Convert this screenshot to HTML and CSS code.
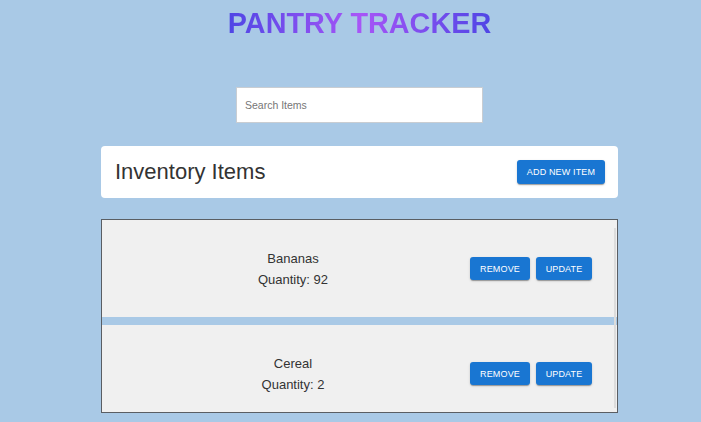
FILE: index.html
```html
<!DOCTYPE html>
<html lang="en">
<head>
<meta charset="utf-8">
<title>Pantry Tracker</title>
<link rel="stylesheet" href="styles.css">
</head>
<body>
  <main class="page">
    <h1 class="title">PANTRY TRACKER</h1>
    <input class="search" type="text" placeholder="Search Items">
    <section class="inventory">
      <div class="header-card">
        <h2 class="header-title">Inventory Items</h2>
        <button class="btn">Add New Item</button>
      </div>
      <div class="list">
        <div class="item">
          <div class="item-text">
            <div>Bananas</div>
            <div>Quantity: 92</div>
          </div>
          <div class="item-actions">
            <button class="btn btn-small">Remove</button>
            <button class="btn btn-small">Update</button>
          </div>
        </div>
        <div class="item">
          <div class="item-text">
            <div>Cereal</div>
            <div>Quantity: 2</div>
          </div>
          <div class="item-actions">
            <button class="btn btn-small">Remove</button>
            <button class="btn btn-small">Update</button>
          </div>
        </div>
        <div class="thumb"></div>
      </div>
    </section>
  </main>
</body>
</html>
```

FILE: styles.css
```css
* { box-sizing: border-box; }
html, body { margin: 0; padding: 0; }
body {
  background: #a9c9e6;
  font-family: "Liberation Sans", Arial, sans-serif;
  width: 701px;
  height: 422px;
  overflow: hidden;
}
.page {
  display: flex;
  flex-direction: column;
  align-items: center;
  padding-top: 7px;
  padding-left: 18px;
}
.title {
  margin: 0;
  font-size: 28.8px;
  line-height: 32px;
  font-weight: 700;
  background: linear-gradient(90deg, #4f46e5 0%, #a855f7 50%, #4f46e5 100%);
  -webkit-background-clip: text;
  background-clip: text;
  color: transparent;
}
.search {
  margin-top: 48px;
  width: 247px;
  height: 36px;
  border: 1px solid #c9cdd2;
  background: #fff;
  padding: 0 8px;
  font-family: "Liberation Sans", Arial, sans-serif;
  font-size: 10.5px;
  color: #333;
  outline: none;
}
.search::placeholder { color: #767676; }
.inventory {
  margin-top: 23px;
  width: 517px;
  display: flex;
  flex-direction: column;
  gap: 21px;
}
.header-card {
  height: 52px;
  background: #fff;
  border-radius: 4px;
  display: flex;
  align-items: center;
  justify-content: space-between;
  padding: 0 13px 0 14px;
}
.header-title {
  margin: 0;
  font-size: 22px;
  font-weight: 400;
  color: #333;
}
.btn {
  background: #1976d2;
  color: #fff;
  border: none;
  border-radius: 3px;
  font-family: "Liberation Sans", Arial, sans-serif;
  font-size: 9px;
  letter-spacing: 0.15px;
  text-transform: uppercase;
  height: 24px;
  width: 88px;
  padding: 0;
  box-shadow: 0 2px 1px -1px rgba(0,0,0,0.2), 0 1px 1px 0 rgba(0,0,0,0.14), 0 1px 3px 0 rgba(0,0,0,0.12);
}
.btn-small {
  height: 23px;
}
.list {
  position: relative;
  height: 194px;
  border: 1px solid #5a5e63;
  overflow: hidden;
  display: flex;
  flex-direction: column;
  gap: 8px;
}
.item {
  flex: none;
  height: 97px;
  background: #f0f0f0;
  display: grid;
  grid-template-columns: 1fr auto;
  align-items: center;
  padding: 0 25px 0 14px;
}
.item-text {
  text-align: center;
  font-size: 13px;
  line-height: 21px;
  color: #333;
}
.item-actions {
  display: flex;
  gap: 6px;
}
.item-actions .btn:first-child { width: 60px; }
.item-actions .btn:last-child { width: 56px; }
.thumb {
  position: absolute;
  right: 1px;
  top: 8px;
  width: 2px;
  height: 180px;
  background: #dcdcdc;
}
```
